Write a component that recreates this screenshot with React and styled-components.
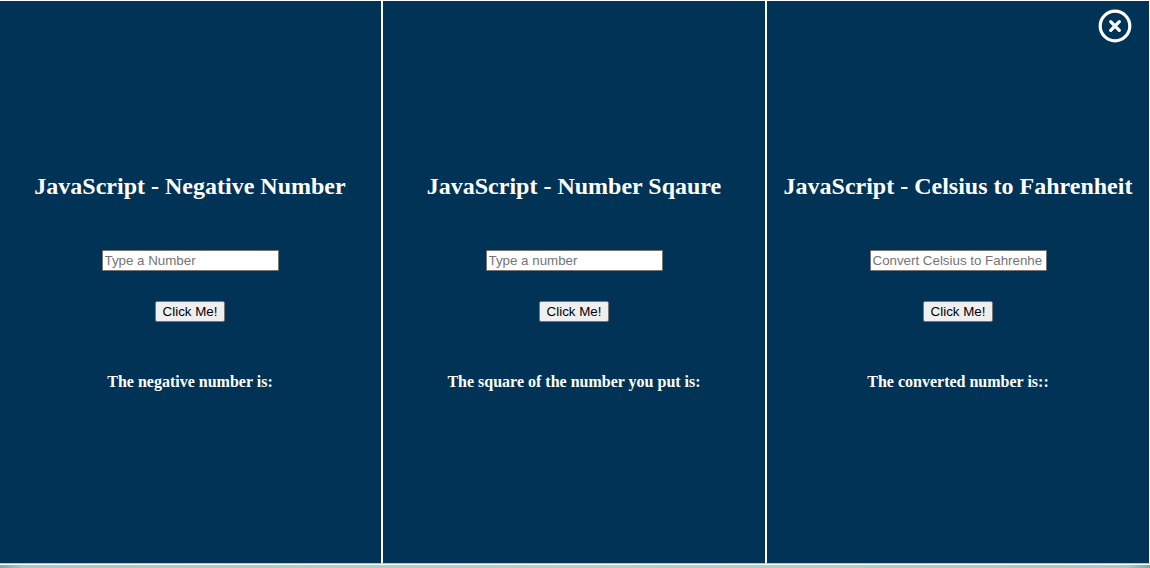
import React, { useState } from "react";
import styled, { createGlobalStyle } from "styled-components";

const GlobalStyle = createGlobalStyle`
  body {
    margin: 0;
    background: #fff;
    font-family: "Liberation Serif", "Times New Roman", serif;
    overflow-x: hidden;
  }
`;

const Page = styled.main`
  position: relative;
  display: flex;
  flex-direction: column;
  box-sizing: border-box;
  min-height: 100vh;
  padding-top: 1px;
`;

const Panels = styled.div`
  flex: 1;
  display: grid;
  grid-template-columns: repeat(3, 1fr);
  gap: 2px;
  margin-left: -1px;
  padding-right: 1px;
`;

const Panel = styled.form`
  display: flex;
  flex-direction: column;
  align-items: center;
  justify-content: center;
  background: #003355;
  color: #fff;
  text-align: center;
`;

const Title = styled.label`
  margin-bottom: 50px;
  font-size: 24px;
  font-weight: bold;
  line-height: 27px;
`;

const NumberInput = styled.input`
  box-sizing: border-box;
  width: 177px;
  height: 21px;
  margin-bottom: 30px;
  padding: 1px 2px;
  border: 1px solid #767676;
  border-radius: 1px;
  background: #fff;
  color: #000;
  font-family: "Liberation Sans", Arial, sans-serif;

  &::placeholder {
    color: #757575;
  }
`;

const Submit = styled.button`
  box-sizing: border-box;
  width: 70px;
  height: 21px;
  margin-bottom: 50px;
  padding: 0;
  border: 1px solid #767676;
  border-radius: 2px;
  background: #efefef;
  color: #000;
  font-family: "Liberation Sans", Arial, sans-serif;
`;

const Result = styled.output`
  font-size: 16px;
  font-weight: bold;
  line-height: 20px;
`;

const CloseButton = styled.button`
  position: absolute;
  top: 9px;
  right: 18px;
  display: flex;
  padding: 0;
  border: 0;
  background: none;
  color: #fff;
  cursor: pointer;
`;

const Footer = styled.footer`
  height: 3px;
  border-top: 1px solid #a5cbd0;
  padding-top: 1px;
  background: linear-gradient(to right, #78aaa9, #a6cac9 24px, #b0cfcd 50%, #a6cac9 calc(100% - 24px), #78aaa9)
    content-box;
`;

const tools = [
  {
    id: "negative",
    title: "JavaScript - Negative Number",
    placeholder: "Type a Number",
    result: "The negative number is:",
    compute: (n) => -n,
  },
  {
    id: "square",
    title: "JavaScript - Number Sqaure",
    placeholder: "Type a number",
    result: "The square of the number you put is:",
    compute: (n) => n * n,
  },
  {
    id: "fahrenheit",
    title: "JavaScript - Celsius to Fahrenheit",
    placeholder: "Convert Celsius to Fahrenhe",
    result: "The converted number is::",
    compute: (n) => (n * 9) / 5 + 32,
  },
];

function CloseIcon() {
  return (
    <svg width="34" height="34" viewBox="0 0 34 34" fill="none" stroke="currentColor" aria-hidden="true">
      <circle cx="17" cy="17" r="14.8" strokeWidth="3.2" />
      <path d="M12.7 12.7l8.6 8.6M21.3 12.7l-8.6 8.6" strokeWidth="3.3" strokeLinecap="round" />
    </svg>
  );
}

function Tool({ id, title, placeholder, result, compute }) {
  const [value, setValue] = useState("");
  const [answer, setAnswer] = useState("");

  const handleSubmit = (event) => {
    event.preventDefault();
    setAnswer(` ${compute(Number(value))}`);
  };

  return (
    <Panel onSubmit={handleSubmit}>
      <Title htmlFor={id}>{title}</Title>
      <NumberInput
        id={id}
        type="text"
        placeholder={placeholder}
        value={value}
        onChange={(event) => setValue(event.target.value)}
      />
      <Submit type="submit">Click Me!</Submit>
      <Result htmlFor={id}>
        {result}
        {answer}
      </Result>
    </Panel>
  );
}

export default function App() {
  return (
    <>
      <GlobalStyle />
      <Page>
        <Panels>
          {tools.map((tool) => (
            <Tool key={tool.id} {...tool} />
          ))}
        </Panels>
        <Footer />
        <CloseButton type="button" aria-label="Close">
          <CloseIcon />
        </CloseButton>
      </Page>
    </>
  );
}
